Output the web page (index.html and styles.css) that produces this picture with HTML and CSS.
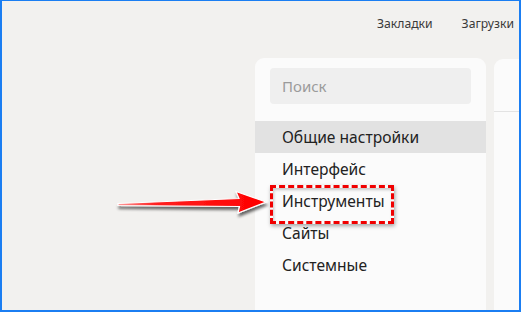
FILE: index.html
```html
<!DOCTYPE html>
<html lang="ru">
<head>
<meta charset="utf-8">
<link rel="stylesheet" href="styles.css">
</head>
<body>
<div class="frame">
  <header class="topbar">
    <a class="toplink">Закладки</a>
    <a class="toplink">Загрузки</a>
  </header>
  <main class="content">
    <aside class="sidebar">
      <div class="search">Поиск</div>
      <nav class="menu">
        <div class="item active">Общие настройки</div>
        <div class="item">Интерфейс</div>
        <div class="item marked">Инструменты</div>
        <div class="item">Сайты</div>
        <div class="item">Системные</div>
      </nav>
    </aside>
    <section class="panel">
      <div class="panel-head"></div>
    </section>
  </main>
  <svg class="arrow" width="521" height="312" viewBox="0 0 521 312">
    <defs>
      <filter id="sh" x="-10%" y="-50%" width="120%" height="200%">
        <feGaussianBlur in="SourceAlpha" stdDeviation="1.6"/>
        <feOffset dx="1" dy="3" result="b"/>
        <feComponentTransfer><feFuncA type="linear" slope="0.6"/></feComponentTransfer>
        <feMerge><feMergeNode/><feMergeNode in="SourceGraphic"/></feMerge>
      </filter>
      <linearGradient id="g" x1="0" x2="1" y1="0" y2="0">
        <stop offset="0" stop-color="#ff9a9a"/>
        <stop offset="0.25" stop-color="#ff2020"/>
        <stop offset="1" stop-color="#ff0000"/>
      </linearGradient>
    </defs>
    <polygon filter="url(#sh)" points="118,203.5 239,198.5 236,191.5 266,202 238,213 239.5,206.5 118,205.5" fill="url(#g)" stroke="#ffffff" stroke-width="1.2" stroke-linejoin="miter"/>
  </svg>
</div>
</body>
</html>
```
FILE: styles.css
```css
* { box-sizing: border-box; }
html, body { margin: 0; padding: 0; }
body {
  width: 521px;
  height: 312px;
  overflow: hidden;
  font-family: "Noto Sans", "Open Sans", sans-serif;
}
.frame {
  position: relative;
  width: 521px;
  height: 312px;
  background: #f2f1ef;
  border: 1px solid #1b7ef2;
  border-left-width: 2px;
  border-right-width: 2px;
  border-bottom-width: 2px;
  overflow: hidden;
  display: flex;
  flex-direction: column;
}
.topbar {
  height: 57px;
  display: flex;
  justify-content: flex-end;
  align-items: flex-start;
  gap: 29px;
  padding: 14px 5px 0 0;
  flex-shrink: 0;
}
.toplink {
  font-size: 12.2px;
  color: #3a3a3a;
  line-height: 18px;
  white-space: nowrap;
}
.content {
  flex: 1;
  display: flex;
  gap: 8px;
  padding-left: 253px;
  min-height: 0;
}
.sidebar {
  width: 231px;
  flex-shrink: 0;
  background: #fbfbfb;
  border-radius: 9px 9px 0 0;
  padding-top: 10px;
}
.search {
  margin: 0 15px 0 15px;
  height: 36px;
  background: #efefef;
  border-radius: 4px;
  color: #9b9b9b;
  font-size: 15px;
  line-height: 36px;
  padding-left: 12px;
}
.menu {
  margin-top: 17px;
  display: flex;
  flex-direction: column;
}
.item {
  height: 32px;
  line-height: 32px;
  padding-left: 27px;
  font-size: 15.6px;
  color: #222222;
  white-space: nowrap;
}
.item.active { background: #e2e2e2; }
.item.marked { position: relative; }
.item.marked::before {
  content: "";
  position: absolute;
  left: 15px;
  top: 0px;
  width: 118px;
  height: 33px;
  border: 3px dashed #f00000;
  box-shadow: 1px 2px 4px rgba(0,0,0,0.35), inset 1px 2px 3px rgba(0,0,0,0.2);
}
.panel {
  flex: 1;
  background: #fbfbfb;
  border-radius: 9px 0 0 0;
  margin-top: 1px;
}
.panel-head {
  height: 53px;
  border-bottom: 1px solid #e3e3e3;
}
.arrow {
  position: absolute;
  left: -2px;
  top: -1px;
  pointer-events: none;
}
```
